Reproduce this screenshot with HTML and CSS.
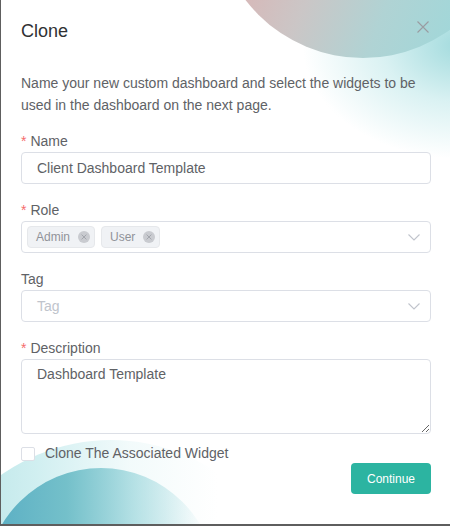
FILE: index.html
```html
<!DOCTYPE html>
<html lang="en">
<head>
<meta charset="utf-8">
<title>Clone</title>
<link rel="stylesheet" href="styles.css">
</head>
<body>
<div class="dialog">
  <div class="deco deco-glow"></div>
  <div class="deco deco-top"></div>
  <div class="deco deco-bl-outer"></div>
  <div class="deco deco-bl-inner"></div>
  <div class="content">
    <header class="header">
      <h2 class="title">Clone</h2>
      <button class="close" type="button" aria-label="Close">
        <svg width="12" height="12" viewBox="0 0 12 12"><path d="M0.5 0.5 L11.5 11.5 M11.5 0.5 L0.5 11.5" stroke="#9a9ca1" stroke-width="1.1" fill="none"/></svg>
      </button>
    </header>
    <p class="intro">Name your new custom dashboard and select the widgets to be used in the dashboard on the next page.</p>
    <form class="form">
      <div class="item">
        <label class="label"><span class="req">*</span>Name</label>
        <input class="input" type="text" value="Client Dashboard Template">
      </div>
      <div class="item">
        <label class="label"><span class="req">*</span>Role</label>
        <div class="select">
          <div class="tags">
            <span class="tag">Admin<i class="tag-close"><svg width="12" height="12" viewBox="0 0 12 12"><path d="M3.6 3.6 L8.4 8.4 M8.4 3.6 L3.6 8.4" stroke="#a3a6ad" stroke-width="1" fill="none"/></svg></i></span>
            <span class="tag">User<i class="tag-close"><svg width="12" height="12" viewBox="0 0 12 12"><path d="M3.6 3.6 L8.4 8.4 M8.4 3.6 L3.6 8.4" stroke="#a3a6ad" stroke-width="1" fill="none"/></svg></i></span>
          </div>
          <svg class="arrow" width="12" height="7" viewBox="0 0 12 7"><path d="M0.5 0.5 L6 6 L11.5 0.5" stroke="#c0c4cc" stroke-width="1.1" fill="none"/></svg>
        </div>
      </div>
      <div class="item">
        <label class="label">Tag</label>
        <div class="select">
          <span class="placeholder">Tag</span>
          <svg class="arrow" width="12" height="7" viewBox="0 0 12 7"><path d="M0.5 0.5 L6 6 L11.5 0.5" stroke="#c0c4cc" stroke-width="1.1" fill="none"/></svg>
        </div>
      </div>
      <div class="item item-desc">
        <label class="label"><span class="req">*</span>Description</label>
        <textarea class="textarea">Dashboard Template</textarea>
      </div>
      <label class="check">
        <span class="check-box"></span>
        <span class="check-text">Clone The Associated Widget</span>
      </label>
      <div class="actions">
        <button class="btn" type="button">Continue</button>
      </div>
    </form>
  </div>
</div>
</body>
</html>
```

FILE: styles.css
```css
* { box-sizing: border-box; margin: 0; padding: 0; }
html, body { height: 100%; }
body {
  background: #5e5e5e;
  font-family: "Liberation Sans", Arial, sans-serif;
  overflow: hidden;
}
.dialog {
  position: relative;
  margin-left: 1px;
  width: 449px;
  height: 524px;
  background: #fff;
  overflow: hidden;
}
.deco {
  position: absolute;
  border-radius: 50%;
  pointer-events: none;
}
.deco-glow {
  left: 300px;
  top: -70px;
  width: 320px;
  height: 230px;
  background: radial-gradient(ellipse, rgba(145, 212, 215, 0.85) 0%, rgba(180, 228, 230, 0.5) 35%, rgba(255, 255, 255, 0) 70%);
}
.deco-top {
  left: 214px;
  top: -238px;
  width: 296px;
  height: 296px;
  background: linear-gradient(112deg, #dcb2b2 22%, #cbc6c6 45%, #b0d3d4 65%, #9ed8da 88%);
}
.deco-bl-outer {
  left: -80px;
  top: 440px;
  width: 380px;
  height: 380px;
  background: linear-gradient(90deg, rgba(175, 224, 227, 1) 0%, rgba(200, 236, 238, 0.85) 30%, rgba(230, 246, 247, 0.5) 55%, rgba(255, 255, 255, 0) 78%);
}
.deco-bl-inner {
  left: -15px;
  top: 468px;
  width: 230px;
  height: 230px;
  background: linear-gradient(90deg, #58adc3 0%, #74c0ca 35%, rgba(150, 212, 218, 0.65) 65%, rgba(255, 255, 255, 0) 95%);
}
.content {
  position: relative;
  z-index: 1;
  padding: 20px 19px 0 20px;
}
.header {
  display: flex;
  justify-content: space-between;
  align-items: flex-start;
}
.title {
  font-size: 18px;
  line-height: 22px;
  font-weight: normal;
  color: #303133;
}
.close {
  border: 0;
  background: none;
  width: 12px;
  height: 12px;
  margin-top: 1px;
  margin-right: 2px;
  display: flex;
}
.intro {
  margin-top: 30px;
  font-size: 14px;
  line-height: 22px;
  color: #606266;
}
.form { margin-top: 15px; }
.item { margin-bottom: 16px; }
.item-desc { margin-bottom: 9px; }
.label {
  display: block;
  font-size: 14px;
  line-height: 21px;
  color: #606266;
}
.req {
  color: #f56c6c;
  margin-right: 4px;
}
.input {
  display: block;
  width: 100%;
  height: 32px;
  border: 1px solid #dcdfe6;
  border-radius: 4px;
  padding: 0 15px;
  font-family: inherit;
  font-size: 14px;
  color: #606266;
  background: #fff;
  outline: none;
}
.select {
  display: flex;
  align-items: center;
  height: 32px;
  border: 1px solid #dcdfe6;
  border-radius: 4px;
  background: #fff;
  padding-right: 10px;
}
.tags {
  flex: 1;
  display: flex;
  gap: 6px;
  padding-left: 5px;
}
.tag {
  display: inline-flex;
  align-items: center;
  height: 22px;
  padding: 0 4px 0 8px;
  background: #f0f2f5;
  border: 1px solid #e6e8eb;
  border-radius: 4px;
  font-size: 12px;
  color: #909399;
}
.tag-close {
  display: inline-flex;
  width: 12px;
  height: 12px;
  margin-left: 8px;
  border-radius: 50%;
  background: #c9cbd0;
}
.placeholder {
  flex: 1;
  padding-left: 15px;
  font-size: 14px;
  color: #c0c4cc;
}
.arrow { flex: none; }
.textarea {
  display: block;
  width: 100%;
  height: 75px;
  border: 1px solid #dcdfe6;
  border-radius: 4px;
  padding: 4px 15px;
  font-family: inherit;
  font-size: 14px;
  line-height: 21px;
  color: #606266;
  resize: vertical;
  outline: none;
  background: #fff;
}
.check {
  display: flex;
  align-items: center;
  height: 20px;
  gap: 10px;
}
.check-box {
  width: 14px;
  height: 14px;
  margin-top: 1px;
  border: 1px solid #dcdfe6;
  border-radius: 2px;
  background: #fff;
}
.check-text {
  font-size: 14px;
  line-height: 20px;
  color: #606266;
}
.actions {
  display: flex;
  justify-content: flex-end;
}
.btn {
  width: 80px;
  height: 31px;
  border: 0;
  border-radius: 4px;
  background: #2cb4a1;
  color: #fff;
  font-family: inherit;
  font-size: 12px;
}
```
